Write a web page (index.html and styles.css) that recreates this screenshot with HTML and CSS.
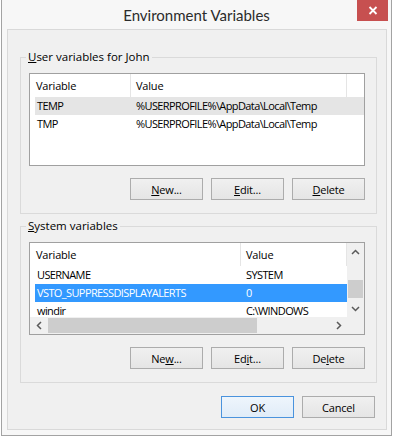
FILE: index.html
```html
<!DOCTYPE html>
<html>
<head>
<meta charset="utf-8">
<link rel="stylesheet" href="styles.css">
</head>
<body>
<div class="window">
  <div class="titlebar">
    <span class="spacer"></span>
    <div class="title">Environment Variables</div>
    <div class="tb-right">
      <div class="close">
        <svg width="10" height="9" viewBox="0 0 10 9"><path d="M1.5 1 L8.5 8 M8.5 1 L1.5 8" stroke="#fff" stroke-width="1.8" fill="none"/></svg>
      </div>
    </div>
  </div>
  <div class="client">
    <fieldset class="group">
      <legend><u>U</u>ser variables for John</legend>
      <div class="listbox list-user">
        <div class="lv-header">
          <div class="hcol c1">Variable</div>
          <div class="hcol c2">Value</div>
        </div>
        <div class="row hot"><div class="c1">TEMP</div><div class="c2">%USERPROFILE%\AppData\Local\Temp</div></div>
        <div class="row"><div class="c1">TMP</div><div class="c2">%USERPROFILE%\AppData\Local\Temp</div></div>
      </div>
      <div class="btn-row">
        <button class="btn"><u>N</u>ew...</button>
        <button class="btn"><u>E</u>dit...</button>
        <button class="btn"><u>D</u>elete</button>
      </div>
    </fieldset>
    <fieldset class="group group2">
      <legend><u>S</u>ystem variables</legend>
      <div class="listbox list-sys">
        <div class="lv-content">
          <div class="lv-header">
            <div class="hcol c1">Variable</div>
            <div class="hcol c2">Value</div>
          </div>
          <div class="row"><div class="c1">USERNAME</div><div class="c2">SYSTEM</div></div>
          <div class="row selected"><div class="c1">VSTO_SUPPRESSDISPLAYALERTS</div><div class="c2">0</div></div>
          <div class="row"><div class="c1">windir</div><div class="c2">C:\WINDOWS</div></div>
        </div>
        <div class="vscroll">
          <div class="sb-arrow"><svg width="9" height="6" viewBox="0 0 9 6"><polyline points="1,5 4.5,1.5 8,5" fill="none" stroke="#5a5a5a" stroke-width="1.5"/></svg></div>
          <div class="v-track"><div class="v-thumb"></div></div>
          <div class="sb-arrow"><svg width="9" height="6" viewBox="0 0 9 6"><polyline points="1,1 4.5,4.5 8,1" fill="none" stroke="#5a5a5a" stroke-width="1.5"/></svg></div>
        </div>
        <div class="hscroll">
          <div class="sb-arrow"><svg width="6" height="9" viewBox="0 0 6 9"><polyline points="5,1 1.5,4.5 5,8" fill="none" stroke="#5a5a5a" stroke-width="1.5"/></svg></div>
          <div class="h-track"><div class="h-thumb"></div></div>
          <div class="sb-arrow"><svg width="6" height="9" viewBox="0 0 6 9"><polyline points="1,1 4.5,4.5 1,8" fill="none" stroke="#5a5a5a" stroke-width="1.5"/></svg></div>
        </div>
        <div class="corner"></div>
      </div>
      <div class="btn-row">
        <button class="btn">Ne<u>w</u>...</button>
        <button class="btn">Ed<u>i</u>t...</button>
        <button class="btn">De<u>l</u>ete</button>
      </div>
    </fieldset>
    <div class="footer">
      <button class="btn default">OK</button>
      <button class="btn">Cancel</button>
    </div>
  </div>
</div>
</body>
</html>
```

FILE: styles.css
```css
* { box-sizing: border-box; }
html, body { margin: 0; padding: 0; background: #fff; }
body {
  font-family: "Open Sans", "Noto Sans", sans-serif;
  font-size: 11px;
  letter-spacing: -0.2px;
  color: #000;
}
.window {
  width: 391px;
  height: 436px;
  margin-left: 1px;
  border: 1px solid #a3a3a3;
  border-top: none;
  background: #f7f7f7;
  display: flex;
  flex-direction: column;
}
.titlebar {
  height: 29px;
  display: grid;
  grid-template-columns: 1fr auto 1fr;
}
.title {
  font-family: Lato, "Open Sans", sans-serif;
  font-size: 15px;
  letter-spacing: 0;
  line-height: 29px;
  padding-top: 1px;
  color: #2b2b2b;
}
.tb-right {
  display: flex;
  justify-content: flex-end;
  align-items: flex-start;
  padding-right: 3px;
}
.close {
  width: 31px;
  height: 21px;
  background: #c75050;
  display: flex;
  align-items: center;
  justify-content: center;
}
.client {
  flex: 1;
  margin: 0 4px 5px 5px;
  border: 1px solid #d9d9d9;
  background: #f0f0f0;
  padding: 19px 9px 11px 12px;
  display: flex;
  flex-direction: column;
}
.group {
  margin: 0;
  min-width: 0;
  border: 1px solid #dadada;
  padding: 8px 11px 13px 8px;
}
.group2 { margin-top: 4px; }
.group legend {
  padding: 0 2px;
  margin-left: -3px;
  line-height: 16px;
  font-size: 11.5px;
  letter-spacing: 0;
}
.listbox {
  height: 93px;
  border: 1px solid #a0a0a0;
  background: #fff;
  overflow: hidden;
}
.lv-header {
  display: flex;
  height: 23px;
}
.hcol {
  line-height: 23px;
  border-right: 1px solid #e5e5e5;
  white-space: nowrap;
  overflow: hidden;
}
.hcol.c1 { padding-left: 6px; }
.hcol.c2 { padding-left: 5px; }
.row {
  display: flex;
  height: 18px;
  line-height: 18px;
  margin-left: 5px;
  white-space: nowrap;
  letter-spacing: -0.6px;
}
.row .c1 { padding-left: 2px; overflow: hidden; }
.row .c2 { padding-left: 5px; overflow: hidden; }
.row.hot { background: #e5e5e5; }
.row.selected { background: #3399ff; color: #fff; }

.list-user .hcol.c1 { width: 101px; }
.list-user .hcol.c2 { width: 216px; }
.list-user .row .c1 { width: 96px; }
.list-user .row .c2 { width: 216px; }

.list-sys {
  display: grid;
  grid-template-columns: 1fr 17px;
  grid-template-rows: 1fr 17px;
}
.lv-content { overflow: hidden; }
.list-sys .hcol.c1 { width: 211px; }
.list-sys .hcol.c2 { width: 106px; }
.list-sys .row .c1 { width: 206px; }
.list-sys .row .c2 { width: 106px; }

.vscroll {
  background: #f0f0f0;
  display: flex;
  flex-direction: column;
}
.hscroll {
  background: #f0f0f0;
  display: flex;
}
.corner { background: #f0f0f0; }
.sb-arrow {
  width: 17px;
  height: 17px;
  flex: none;
  display: flex;
  align-items: center;
  justify-content: center;
}
.v-track { flex: 1; padding: 0 1px; }
.v-thumb { margin-top: 20px; height: 18px; background: #cdcdcd; }
.h-track { flex: 1; padding: 1px 0; }
.h-thumb { margin-left: 1px; width: 209px; height: 15px; background: #cdcdcd; }

.btn-row {
  display: flex;
  justify-content: flex-end;
  gap: 8px;
  margin-top: 12px;
}
.btn {
  width: 73px;
  height: 22px;
  padding: 0;
  border: 1px solid #acacac;
  background: linear-gradient(#f0f0f0, #e5e5e5);
  font-family: "Open Sans", "Noto Sans", sans-serif;
  font-size: 11px;
  letter-spacing: -0.2px;
  color: #000;
  border-radius: 0;
}
.btn.default {
  border-color: #4a93dd;
  background: linear-gradient(#eef5fc, #e0ecf8);
}
.footer {
  display: flex;
  justify-content: flex-end;
  gap: 8px;
  margin-top: 13px;
  margin-right: 2px;
}
```
